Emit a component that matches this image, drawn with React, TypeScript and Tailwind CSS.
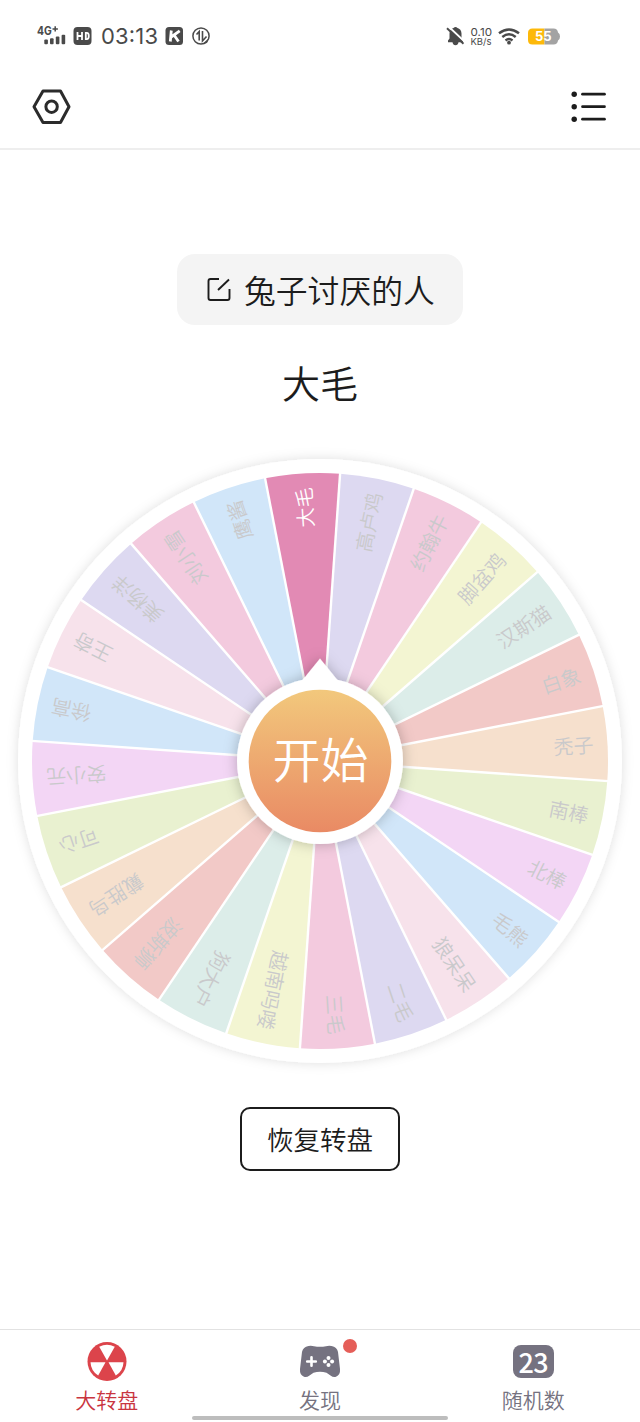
import React from "react";

type Segment = { label: string; color: string; active?: boolean };

const SEGMENTS: Segment[] = [
  { label: "大毛", color: "#e28ab4", active: true },
  { label: "高卢鸡", color: "#ddd9f1" },
  { label: "约翰牛", color: "#f3cade" },
  { label: "脚盆鸡", color: "#f3f5d2" },
  { label: "汉斯猫", color: "#dcede9" },
  { label: "白象", color: "#f2c9c7" },
  { label: "秃子", color: "#f6e0cd" },
  { label: "南棒", color: "#e9f1d0" },
  { label: "北棒", color: "#f3d6f5" },
  { label: "毛熊", color: "#d1e6f9" },
  { label: "狼呆呆", color: "#f7e2eb" },
  { label: "二毛", color: "#ddd9f1" },
  { label: "三毛", color: "#f3cade" },
  { label: "越南吗喽", color: "#f3f5d2" },
  { label: "狗大户", color: "#dcede9" },
  { label: "波斯狮", color: "#f2c9c7" },
  { label: "戴胜鸟", color: "#f6e0cd" },
  { label: "可心", color: "#e9f1d0" },
  { label: "安小元", color: "#f3d6f5" },
  { label: "徐高", color: "#d1e6f9" },
  { label: "王奇", color: "#f7e2eb" },
  { label: "美杨洋", color: "#ddd9f1" },
  { label: "刘小雪", color: "#f3cade" },
  { label: "鹰酱", color: "#d1e6f9" },
];

const STEP = 360 / SEGMENTS.length;
const START = -11;
const RADIUS = 288;

function point(angle: number, r: number) {
  const a = (angle * Math.PI) / 180;
  return `${(Math.sin(a) * r).toFixed(2)} ${(-Math.cos(a) * r).toFixed(2)}`;
}

function Wheel() {
  return (
    <svg width="640" height="640" viewBox="-320 -320 640 640" className="block">
      <defs>
        <linearGradient id="hub" x1="0" y1="0" x2="0" y2="1">
          <stop offset="0" stopColor="#f2c87c" />
          <stop offset="1" stopColor="#e98a64" />
        </linearGradient>
        <filter id="rim" x="-20%" y="-20%" width="140%" height="140%">
          <feDropShadow dx="0" dy="0" stdDeviation="6" floodColor="#000" floodOpacity="0.13" />
        </filter>
        <filter id="hubShadow" x="-30%" y="-30%" width="160%" height="160%">
          <feDropShadow dx="0" dy="0" stdDeviation="7" floodColor="#000" floodOpacity="0.25" />
        </filter>
      </defs>
      <circle r="302" fill="#fff" filter="url(#rim)" />
      {SEGMENTS.map((s, i) => {
        const a = START + i * STEP;
        return (
          <path
            key={s.label}
            d={`M0 0L${point(a, RADIUS)}A${RADIUS} ${RADIUS} 0 0 1 ${point(a + STEP, RADIUS)}Z`}
            fill={s.color}
          />
        );
      })}
      {SEGMENTS.map((s, i) => (
        <path key={s.label} d={`M0 0L${point(START + i * STEP, RADIUS + 1)}`} stroke="#fff" strokeWidth="2.4" />
      ))}
      {SEGMENTS.map((s, i) => (
        <text
          key={s.label}
          x="274"
          y="8"
          textAnchor="end"
          fontSize="20"
          fill={s.active ? "#fff" : "#c9c9cb"}
          transform={`rotate(${START + (i + 0.5) * STEP - 90})`}
          className="font-[350]"
        >
          {s.label}
        </text>
      ))}
      <g filter="url(#hubShadow)">
        <path d="M0 -102.5L19 -79L-19 -79Z" fill="#fff" />
        <circle r="83" fill="#fff" />
      </g>
      <circle r="71.3" fill="url(#hub)" />
      <text x="0.5" y="16.7" textAnchor="middle" fontSize="48" fill="#fff" className="font-[350]">
        开始
      </text>
    </svg>
  );
}

function StatusBar() {
  return (
    <div className="flex h-[72px] items-center text-[#4a4a4a]">
      <svg width="180" height="30" viewBox="35 21 180 30" className="ml-[35px]">
        <text x="37" y="34.6" fontSize="11.5" fontWeight="700" fill="#4a4a4a" fontFamily="Inter" textLength="14.8" lengthAdjust="spacingAndGlyphs">
          4G
        </text>
        <path d="M55.2 26.2V31.6M52.5 28.9H57.9" stroke="#4a4a4a" strokeWidth="1.5" />
        <g fill="#4a4a4a">
          <rect x="44.3" y="39.5" width="3.6" height="4.8" rx="1" />
          <rect x="50" y="38.3" width="3.6" height="6" rx="1" />
          <rect x="55.8" y="36.5" width="3.6" height="7.8" rx="1" />
          <rect x="61.6" y="34.8" width="3.6" height="9.5" rx="1" />
          <rect x="73.5" y="27" width="18" height="18" rx="4" />
          <rect x="165.5" y="27" width="17.5" height="18" rx="3.5" />
        </g>
        <path d="M77.5 32v8M82 32v8M77.5 36H82M85.8 32.9h1q2 0 2 3.1t-2 3.1h-1z" fill="none" stroke="#fff" strokeWidth="1.8" />
        <text x="101" y="44.2" fontSize="22" fill="#4a4a4a" fontFamily="Inter" textLength="57">
          03:13
        </text>
        <path d="M171.3 30.5L170.3 41.5M179.7 30.8L171.2 37M174.2 35.2L178.5 41.5" fill="none" stroke="#fff" strokeWidth="2.8" />
        <circle cx="201" cy="36" r="8.1" fill="none" stroke="#4a4a4a" strokeWidth="1.5" />
        <path d="M196.5 34.5L199.2 31.5V40.5M202.5 31V41L206.5 36.5" fill="none" stroke="#4a4a4a" strokeWidth="1.6" />
        <path d="M202.5 44L208.5 38.5L207 43Z" fill="#4a4a4a" />
      </svg>
      <svg width="120" height="30" viewBox="445 21 120 30" className="ml-[230px]">
        <path
          d="M448 42.3h15v-1.8l-1.5-2v-5c0-3-1.8-5-4-5.5q-2-2-4 0c-2.5.7-4 2.5-4 5.5v5l-1.5 2zM452.5 42.3h6q-.5 3-3 3t-3-3"
          fill="#4a4a4a"
        />
        <path d="M448.5 26.5L465 42" stroke="#fff" strokeWidth="1.8" />
        <path d="M447 28.3L463.5 43.8" stroke="#4a4a4a" strokeWidth="1.9" />
        <text x="470.5" y="35.8" fontSize="11" fill="#4a4a4a" fontFamily="Inter" textLength="21.5" lengthAdjust="spacingAndGlyphs">
          0.10
        </text>
        <text x="470.5" y="45" fontSize="9.5" fill="#4a4a4a" fontFamily="Inter" textLength="21" lengthAdjust="spacingAndGlyphs">
          KB/s
        </text>
        <g fill="none" stroke="#4a4a4a" strokeWidth="2.4">
          <path d="M499 33.3q10-7.8 20 0M502.3 37q6.7-5.6 13.4 0M505.5 40.5q3.5-2.9 7 0" />
        </g>
        <circle cx="509" cy="42.7" r="1.9" fill="#4a4a4a" />
        <path d="M532.5 28.5H544.5V44.5H532.5Q528 44.5 528 40V33Q528 28.5 532.5 28.5Z" fill="#fdb90a" />
        <path d="M544.5 28.5H553.5Q557.5 28.5 558 32.5Q560 33.5 560 36.5T558 40.5Q557.5 44.5 553.5 44.5H544.5Z" fill="#a3a3a3" />
        <text x="543.3" y="41.3" fontSize="13" fontWeight="700" fill="#fff" fontFamily="Inter" textAnchor="middle">
          55
        </text>
      </svg>
    </div>
  );
}

function Header() {
  return (
    <header className="h-[150px] border-b-2 border-[#eeeeee]">
      <StatusBar />
      <div className="flex h-[70px] items-center justify-between pr-[33px] pl-[32px]">
        <svg width="40" height="36" viewBox="0 0 40 36" fill="none" stroke="#2b2b2b" className="block">
          <path d="M11 2H28.5L37 17.7L28.5 33.5H11L2 17.7Z" strokeWidth="3" strokeLinejoin="round" />
          <circle cx="19.6" cy="17.7" r="5.7" strokeWidth="3" />
        </svg>
        <svg width="36" height="36" viewBox="0 0 36 36" fill="#1c1c1c" className="block">
          {[5.2, 17.7, 30.2].map((y) => (
            <g key={y}>
              <circle cx="3.2" cy={y} r="2.7" />
              <path d={`M11.5 ${y}H33.5`} stroke="#1c1c1c" strokeWidth="2.7" strokeLinecap="round" />
            </g>
          ))}
        </svg>
      </div>
    </header>
  );
}

function TabBar() {
  return (
    <nav className="mt-auto h-[93px] border-t border-[#e2e2e2]">
      <div className="grid h-[86px] grid-cols-3 text-[21px] leading-[30px] font-[350] text-[#757280]">
        <div className="flex flex-col items-center pt-[11px] text-[#c9353f]">
          <svg width="42" height="42" viewBox="-21 -20.5 42 42" className="block">
            <circle r="19.5" fill="#dc444b" />
            <g fill="#fff">
              <path d="M0 -1L-7.8 -14.7A16.5 16.5 0 0 1 7.8 -14.7Z" />
              <path d="M-1.5 .7H-16.5A16.5 16.5 0 0 0 -8.8 14Z" />
              <path d="M1.5 .7H16.5A16.5 16.5 0 0 1 8.8 14Z" />
            </g>
          </svg>
          <span className="mt-px">大转盘</span>
        </div>
        <div className="flex flex-col items-center pt-[11px]">
          <div className="relative">
            <svg width="42" height="42" viewBox="0 0 42 42" className="block">
              <path
                d="M9.5 5Q12 4.3 15 5.2Q21 6.2 27 5.2Q30 4.3 32.5 5Q38 6 39 11L41 28Q41.5 34 37 35.7Q34.5 36.7 31.5 34.5L27.5 31.8Q21 29.5 14.5 31.8L10.5 34.5Q7.5 36.7 5 35.7Q.5 34 1 28L3 11Q4 6 9.5 5Z"
                fill="#757280"
              />
              <path d="M8.2 20.5H16.8M12.5 16.2V24.8" stroke="#fff" strokeWidth="2.6" strokeLinecap="round" />
              <g fill="#fff">
                <circle cx="29.5" cy="16.9" r="2" />
                <circle cx="29.5" cy="24.1" r="2" />
                <circle cx="25.9" cy="20.5" r="2" />
                <circle cx="33.1" cy="20.5" r="2" />
              </g>
            </svg>
            <span className="absolute -top-[2.5px] left-[44px] size-[14px] rounded-full bg-[#e55e58]" />
          </div>
          <span className="mt-px">发现</span>
        </div>
        <div className="flex flex-col items-center pt-[11px]">
          <div className="mt-[4px] mb-[5px] flex h-[33px] w-[41px] items-center justify-center rounded-[8px] bg-[#757280] pb-px font-['Noto_Sans_CJK_SC',sans-serif] text-[27px] leading-none font-medium tracking-[-0.5px] text-white">
            23
          </div>
          <span className="mt-px">随机数</span>
        </div>
      </div>
      <div className="mx-auto h-[4px] w-[256px] rounded-full bg-[#bdbdbd]" />
    </nav>
  );
}

export default function App() {
  return (
    <div className="flex h-[1422px] w-[640px] flex-col overflow-hidden bg-white font-['Noto_Sans_CJK_SC',sans-serif] text-[#1c1c1c]">
      <Header />
      <main className="flex flex-col items-center">
        <button className="mt-[104px] flex h-[71px] w-[286px] items-center rounded-[18px] bg-[#f4f4f4] pl-[30px]">
          <svg width="26" height="26" viewBox="0.5 0 26 26" fill="none" stroke="#1c1c1c" strokeWidth="1.9" className="block">
            <path d="M12.5 2H4Q2 2 2 4V21Q2 23 4 23H21Q23 23 23 21V12" />
            <path d="M22.5 2.5L11.5 13" />
          </svg>
          <span className="ml-[11px] pb-px text-[31.8px] leading-[38px] font-[350]">兔子讨厌的人</span>
        </button>
        <h1 className="mt-[29px] text-[38px] leading-[56px] font-[350]">大毛</h1>
        <div className="mt-[30.5px] h-[640px]">
          <Wheel />
        </div>
        <button className="mt-[26.5px] flex h-[64px] w-[160px] items-center justify-center rounded-[10px] border-2 border-[#1c1c1c] text-[26.5px] leading-none font-[350]">
          恢复转盘
        </button>
      </main>
      <TabBar />
    </div>
  );
}
